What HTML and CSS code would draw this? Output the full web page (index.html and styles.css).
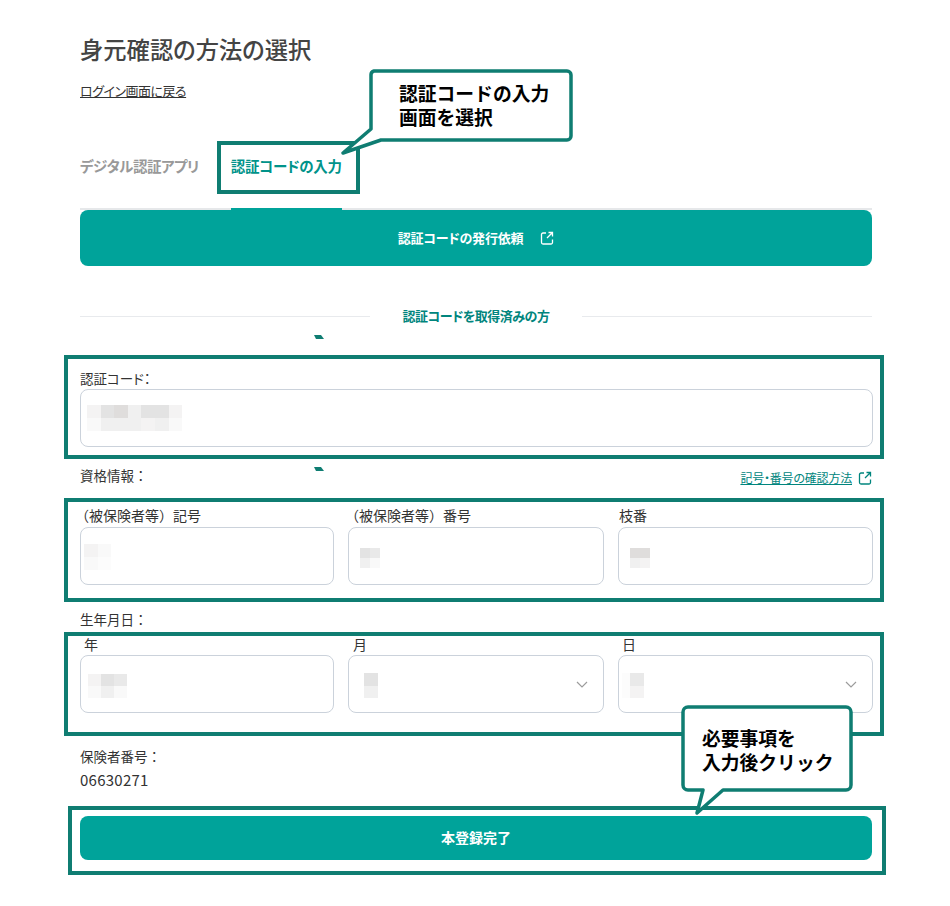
FILE: index.html
```html
<!DOCTYPE html>
<html lang="ja">
<head>
    <meta charset="UTF-8">
    <title>身元確認の方法の選択</title>
    <link rel="stylesheet" href="styles.css">
</head>
<body>
    <main class="page">
        <h1>身元確認の方法の選択</h1>
        <a class="back-link">ログイン画面に戻る</a>

        <div class="tabs">
            <span class="tab">デジタル認証アプリ</span>
            <span class="tab active">認証コードの入力</span>
        </div>

        <button class="btn btn-request">
            認証コードの発行依頼
            <svg class="ext-icon" viewBox="0 0 14 14"><path d="M6 2H3a1.5 1.5 0 0 0-1.5 1.5v8A1.5 1.5 0 0 0 3 13h8a1.5 1.5 0 0 0 1.5-1.5V8.5M8.5 1.5h4v4M12.5 1.5 7 7"/></svg>
        </button>

        <div class="divider"><span>認証コードを取得済みの方</span></div>

        <label class="field-label code-label">認証コード：</label>
        <div class="input input-code">
            <div class="mosaic mosaic-code">
                <span class="s5"></span><span class="s2"></span><span class="s1"></span><span class="s4"></span><span class="s2"></span><span class="s2"></span><span class="s5"></span>
                <span class="s6"></span><span class="s4"></span><span class="s4"></span><span class="s4"></span><span class="s5"></span><span class="s4"></span><span class="s6"></span>
            </div>
        </div>

        <div class="info-head">
            <span class="field-label plain">資格情報：</span>
            <a class="help-link">記号・番号の確認方法
                <svg class="ext-icon" viewBox="0 0 14 14"><path d="M6 2H3a1.5 1.5 0 0 0-1.5 1.5v8A1.5 1.5 0 0 0 3 13h8a1.5 1.5 0 0 0 1.5-1.5V8.5M8.5 1.5h4v4M12.5 1.5 7 7"/></svg>
            </a>
        </div>

        <div class="field-row row-info">
            <div>
                <label class="sub-label kigo">（被保険者等）記号</label>
                <div class="input">
                    <div class="mosaic mosaic-kigo"><span class="s5"></span><span class="s6"></span><span class="s6"></span><span class="s7"></span></div>
                </div>
            </div>
            <div>
                <label class="sub-label bango">（被保険者等）番号</label>
                <div class="input">
                    <div class="mosaic mosaic-bango"><span class="s2"></span><span class="s3"></span><span class="s4"></span><span class="s6"></span></div>
                </div>
            </div>
            <div>
                <label class="sub-label eda">枝番</label>
                <div class="input">
                    <div class="mosaic mosaic-eda"><span class="s1"></span><span class="s1"></span><span class="s4"></span><span class="s5"></span></div>
                </div>
            </div>
        </div>

        <label class="field-label plain birth-label">生年月日：</label>
        <div class="field-row row-birth">
            <div>
                <label class="sub-label year">年</label>
                <div class="input">
                    <div class="mosaic mosaic-year"><span class="s5"></span><span class="s2"></span><span class="s3"></span><span class="s6"></span><span class="s4"></span><span class="s6"></span></div>
                </div>
            </div>
            <div>
                <label class="sub-label month">月</label>
                <div class="input select">
                    <div class="mosaic mosaic-month"><span class="s2"></span><span class="s4"></span></div>
                    <svg class="chevron" viewBox="0 0 12 7"><path d="M1 1l5 5 5-5"/></svg>
                </div>
            </div>
            <div>
                <label class="sub-label day">日</label>
                <div class="input select">
                    <div class="mosaic mosaic-day"><span class="s7"></span><span class="s3"></span><span class="s7"></span><span class="s5"></span></div>
                    <svg class="chevron" viewBox="0 0 12 7"><path d="M1 1l5 5 5-5"/></svg>
                </div>
            </div>
        </div>

        <div class="field-label plain insurer-label">保険者番号：</div>
        <div class="insurer-no">06630271</div>

        <button class="btn btn-submit">本登録完了</button>

        <!-- annotations drawn on top of the screenshot -->
        <div class="hl hl-tab"></div>
        <div class="hl hl-code"></div>
        <div class="hl hl-info"></div>
        <div class="hl hl-birth"></div>
        <div class="hl hl-submit"></div>
        <i class="speck speck-a"></i>
        <i class="speck speck-b"></i>

        <div class="callout callout-tab">
            <svg viewBox="0 0 240 90"><path d="M41 2H234a4 4 0 0 1 4 4V67a4 4 0 0 1-4 4H48L10 84 38 60V6a4 4 0 0 1 3-4z"/></svg>
            <p>認証コードの入力<br>画面を選択</p>
        </div>
        <div class="callout callout-submit">
            <svg viewBox="0 0 176 112"><path d="M7 2H165a5 5 0 0 1 5 5V80a5 5 0 0 1-5 5H42L16 108 22 85H7a5 5 0 0 1-5-5V7a5 5 0 0 1 5-5z"/></svg>
            <p>必要事項を<br>入力後クリック</p>
        </div>
    </main>
</body>
</html>
```

FILE: styles.css
```css
* {
    box-sizing: border-box;
}
body {
    margin: 0;
    background: #ffffff;
    color: #333333;
    font-family: "Noto Sans CJK JP", "Noto Sans", sans-serif;
    font-feature-settings: "palt";
}
.page {
    position: relative;
    width: 950px;
    height: 906px;
    padding: 32px 78px 0 80px;
    overflow: hidden;
}
h1 {
    margin: 0;
    color: #444444;
    font-size: 23.3px;
    font-weight: 500;
    line-height: 34px;
}
.back-link {
    display: block;
    width: fit-content;
    margin-top: 15px;
    font-size: 13px;
    letter-spacing: -0.5px;
    line-height: 20px;
    text-decoration: underline;
}

/* tabs */
.tabs {
    display: flex;
    gap: 32px;
    margin-top: 26px;
    border-bottom: 2px solid #e6e8ea;
}
.tab {
    padding: 27px 0 30px;
    color: #999999;
    font-size: 14.5px;
    font-weight: 700;
    letter-spacing: -0.5px;
    line-height: 24px;
    margin-bottom: -2px;
    border-bottom: 2px solid transparent;
}
.tab.active {
    color: #00938a;
    letter-spacing: -0.3px;
    border-bottom-color: #00a39a;
}

/* buttons */
.btn {
    display: flex;
    align-items: center;
    justify-content: center;
    width: 100%;
    border: none;
    border-radius: 8px;
    background: #00a39a;
    color: #ffffff;
    font-family: inherit;
    font-feature-settings: inherit;
    font-size: 13px;
    font-weight: 700;
}
.btn-request {
    gap: 17px;
    height: 56px;
    padding-bottom: 2px;
    letter-spacing: -0.2px;
}
.btn-submit {
    height: 44px;
    margin-top: 26px;
    padding-bottom: 3px;
    font-size: 14px;
}
.ext-icon {
    width: 14px;
    height: 14px;
    fill: none;
    stroke: currentColor;
    stroke-width: 1.3;
}

.divider {
    display: flex;
    align-items: center;
    margin-top: 40px;
    color: #00857d;
    font-size: 13px;
    font-weight: 700;
    letter-spacing: -0.5px;
    line-height: 20px;
}
.divider::before,
.divider::after {
    content: "";
    flex: 1;
    height: 1px;
    background: #e8eaed;
}
.divider span {
    padding: 0 33px;
}

/* form */
.field-label {
    display: block;
    font-size: 13.5px;
    line-height: 20px;
}
.field-label.plain {
    font-feature-settings: normal;
}
.code-label {
    margin-top: 42px;
    margin-bottom: 1px;
}
.input {
    display: flex;
    align-items: center;
    justify-content: space-between;
    height: 58px;
    border: 1px solid #cbd2db;
    border-radius: 8px;
    background: #ffffff;
}
.input-code {
    width: 793px;
}
.info-head {
    display: flex;
    justify-content: space-between;
    margin-top: 18px;
}
.help-link {
    display: flex;
    align-items: center;
    gap: 6px;
    margin-top: 4px;
    color: #00857d;
    font-size: 12px;
    letter-spacing: -0.2px;
    text-decoration: underline;
}
.field-row {
    display: grid;
    grid-template-columns: 254px 256px 255px;
    gap: 14px;
}
.row-info {
    margin-top: 19px;
}
.row-birth {
    margin-top: 5px;
}
.sub-label {
    display: block;
    font-size: 14px;
    font-feature-settings: normal;
    line-height: 20px;
    margin-bottom: 2px;
}
.row-birth .sub-label {
    margin-bottom: 1px;
}
.sub-label.kigo {
    margin-left: -5px;
}
.sub-label.bango {
    margin-left: -3px;
}
.sub-label.eda {
    margin-left: 1px;
}
.sub-label.year {
    margin-left: 4px;
}
.sub-label.month {
    margin-left: 5px;
}
.sub-label.day {
    margin-left: 4px;
}
.birth-label {
    margin-top: 24px;
}
.insurer-label {
    margin-top: 33px;
}
.insurer-no {
    margin-top: 4px;
    font-size: 15px;
    letter-spacing: 0.25px;
    line-height: 20px;
}
.chevron {
    width: 12px;
    height: 7px;
    margin-right: 15px;
    fill: none;
    stroke: #9c9c9c;
    stroke-width: 1.2;
}

/* blurred values */
.mosaic {
    display: grid;
}
.mosaic span {
    display: block;
}
.mosaic-code {
    grid-template-columns: repeat(7, 13.6px);
    grid-auto-rows: 13px;
    margin-left: 6px;
}
.mosaic-kigo {
    grid-template-columns: 14px 13px;
    grid-auto-rows: 13px;
    margin-left: 3px;
    margin-top: 1px;
}
.mosaic-bango {
    grid-template-columns: 10px 10px;
    grid-auto-rows: 10px;
    margin-left: 11px;
    margin-top: 3px;
}
.mosaic-eda {
    grid-template-columns: 10px 10px;
    grid-auto-rows: 10px;
    margin-left: 11px;
    margin-top: 3px;
}
.mosaic-year {
    grid-template-columns: repeat(3, 13px);
    grid-auto-rows: 12px;
    margin-left: 7px;
    margin-top: 3px;
}
.mosaic-month {
    grid-template-columns: 14px;
    grid-auto-rows: 12.5px;
    margin-left: 15px;
    margin-top: 3px;
}
.mosaic-day {
    grid-template-columns: 8px 14px;
    grid-auto-rows: 12.5px;
    margin-left: 3px;
    margin-top: 3px;
}
.s1 { background: #dfdddc; }
.s2 { background: #e3e3e3; }
.s3 { background: #e9e9e9; }
.s4 { background: #f0f0f0; }
.s5 { background: #f4f3f3; }
.s6 { background: #f9f9f9; }
.s7 { background: #fcfcfc; }

/* annotations */
.hl {
    position: absolute;
    border: 4px solid #0f7d72;
}
.hl-tab {
    left: 217px;
    top: 141px;
    width: 143px;
    height: 53px;
}
.hl-code {
    left: 64px;
    top: 355px;
    width: 820px;
    height: 104px;
}
.hl-info {
    left: 64px;
    top: 498px;
    width: 820px;
    height: 104px;
}
.hl-birth {
    left: 64px;
    top: 632px;
    width: 820px;
    height: 104px;
}
.hl-submit {
    left: 68px;
    top: 806px;
    width: 818px;
    height: 69px;
}
.speck {
    position: absolute;
    left: 314px;
    width: 10px;
    height: 4px;
    background: #0f7d72;
    clip-path: polygon(0 0, 70% 0, 100% 100%, 20% 100%);
}
.speck-a {
    top: 335px;
}
.speck-b {
    top: 467px;
}
.callout {
    position: absolute;
}
.callout svg {
    display: block;
    width: 100%;
    height: 100%;
    fill: #ffffff;
    stroke: #0f7d72;
    stroke-width: 3.5;
    stroke-linejoin: round;
}
.callout p {
    position: absolute;
    margin: 0;
    color: #000000;
    font-size: 18.8px;
    font-weight: 700;
    font-feature-settings: normal;
    line-height: 24px;
    white-space: nowrap;
}
.callout-tab {
    left: 333px;
    top: 69px;
    width: 240px;
    height: 90px;
}
.callout-tab p {
    left: 66px;
    top: 12px;
}
.callout-submit {
    left: 681px;
    top: 705px;
    width: 176px;
    height: 112px;
}
.callout-submit p {
    left: 21px;
    top: 21px;
}
```
